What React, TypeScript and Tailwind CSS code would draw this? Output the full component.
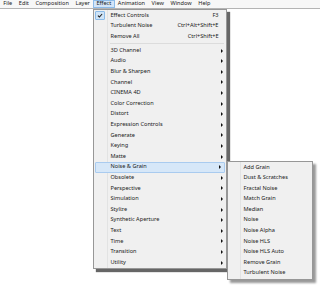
import React from 'react';

const menuBar = ['File', 'Edit', 'Composition', 'Layer', 'Effect', 'Animation', 'View', 'Window', 'Help'];

const topItems = [
  { label: 'Effect Controls', shortcut: 'F3', checked: true },
  { label: 'Turbulent Noise', shortcut: 'Ctrl+Alt+Shift+E' },
  { label: 'Remove All', shortcut: 'Ctrl+Shift+E' },
];

const categories = [
  '3D Channel',
  'Audio',
  'Blur & Sharpen',
  'Channel',
  'CINEMA 4D',
  'Color Correction',
  'Distort',
  'Expression Controls',
  'Generate',
  'Keying',
  'Matte',
  'Noise & Grain',
  'Obsolete',
  'Perspective',
  'Simulation',
  'Stylize',
  'Synthetic Aperture',
  'Text',
  'Time',
  'Transition',
  'Utility',
];

const noiseItems = [
  'Add Grain',
  'Dust & Scratches',
  'Fractal Noise',
  'Match Grain',
  'Median',
  'Noise',
  'Noise Alpha',
  'Noise HLS',
  'Noise HLS Auto',
  'Remove Grain',
  'Turbulent Noise',
];

function Arrow() {
  return <span className="ml-auto mr-[3px] h-0 w-0 border-y-[2px] border-l-[2.5px] border-y-transparent border-l-[#111]" />;
}

function Check() {
  return (
    <span className="ml-[0.5px] flex h-[8.5px] w-[10px] items-center justify-center rounded-[1px] border border-[#8cbbe8] bg-[#cfe4f7]">
      <svg viewBox="0 0 10 8" className="h-[5px] w-[6px]">
        <path d="M1.5 4.2 L4 6.5 L8.5 1.5" fill="none" stroke="#1b1b1b" strokeWidth="1.8" />
      </svg>
    </span>
  );
}

export default function App() {
  return (
    <div className="relative h-[288px] w-[320px] overflow-hidden bg-white font-['Noto_Sans',sans-serif] text-[5.6px] leading-none text-[#1a1a1a]">
      {/* Menu bar */}
      <div className="flex h-[9px] items-stretch border-b border-[#b4b4b4] bg-[#f7f7f7]">
        {menuBar.map((m) => (
          <div
            key={m}
            className={`flex items-center px-[3.3px] ${
              m === 'Effect' ? 'bg-[#d3e5f8] outline outline-1 -outline-offset-1 outline-[#8cbbe8]' : ''
            }`}
          >
            {m}
          </div>
        ))}
      </div>

      {/* Effect menu */}
      <div className="absolute left-[93px] top-[9px] w-[134px] border border-[#979797] bg-[#f0f0f0] shadow-[3px_3px_1px_rgba(0,0,0,0.6)]">
        {topItems.map((it) => (
          <div key={it.label} className="flex h-[10.6px] items-center">
            <div className="flex h-full w-[14px] items-center border-r border-[#e2e3e3]">{it.checked && <Check />}</div>
            <span className="pl-[2.5px]">{it.label}</span>
            <span className="ml-auto pr-[7.5px]">{it.shortcut}</span>
          </div>
        ))}
        <div className="flex h-[3.6px] items-center">
          <div className="h-full w-[14px] border-r border-[#e2e3e3]" />
          <div className="ml-[2px] mr-[2px] h-[1px] flex-1 bg-[#dcdcdc]" />
        </div>
        {categories.map((c) => {
          const active = c === 'Noise & Grain';
          return (
            <div
              key={c}
              className={`flex h-[10.6px] items-center ${
                active ? 'mx-[1px] rounded-[1px] border border-[#a9cbef] bg-[#d6e7f8]' : ''
              }`}
            >
              <div
                className={`h-full border-r ${active ? 'w-[12px] border-transparent' : 'w-[14px] border-[#e2e3e3]'}`}
              />
              <span className="pl-[2.5px]">{c}</span>
              <Arrow />
            </div>
          );
        })}
      </div>

      {/* Noise & Grain submenu */}
      <div className="absolute left-[227px] top-[161px] w-[86px] border border-[#979797] bg-[#f0f0f0] shadow-[3px_3px_2px_rgba(0,0,0,0.4)]">
        {noiseItems.map((n) => (
          <div key={n} className="flex h-[10.6px] items-center">
            <div className="h-full w-[13px] border-r border-[#e2e3e3]" />
            <span className="pl-[2.5px]">{n}</span>
          </div>
        ))}
      </div>
    </div>
  );
}
